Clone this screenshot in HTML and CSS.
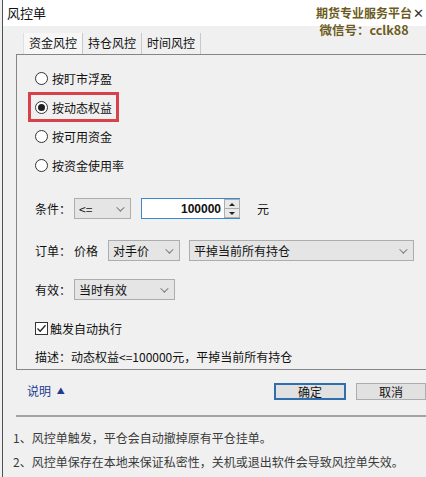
FILE: index.html
```html
<!DOCTYPE html>
<html lang="zh-CN">
<head>
  <meta charset="UTF-8" />
  <title>风控单</title>
  <link rel="stylesheet" href="styles.css">
</head>
<body>
  <div class="window">
    <div class="titlebar">
      <span class="title">风控单</span>
      <span class="close">✕</span>
    </div>
    <div class="watermark">
      <div>期货专业服务平台</div>
      <div class="wx">微信号：cclk88</div>
    </div>

    <div class="content">
      <div class="tabs">
        <span class="tab active">资金风控</span>
        <span class="tab">持仓风控</span>
        <span class="tab">时间风控</span>
      </div>

      <div class="panel">
        <div class="options">
          <label class="radio"><span class="circle"></span>按盯市浮盈</label>
          <label class="radio checked marked"><span class="circle"></span>按动态权益</label>
          <label class="radio"><span class="circle"></span>按可用资金</label>
          <label class="radio"><span class="circle"></span>按资金使用率</label>
        </div>

        <div class="row row-cond">
          <span class="label">条件：</span>
          <div class="select sel-op"><span>&lt;=</span><span class="chev"></span></div>
          <div class="number">
            <span class="value">100000</span>
            <span class="spin"><span class="up"></span><span class="down"></span></span>
          </div>
          <span class="unit">元</span>
        </div>

        <div class="row row-order">
          <span class="label">订单：</span>
          <span class="sub">价格</span>
          <div class="select sel-price"><span>对手价</span><span class="chev"></span></div>
          <div class="select sel-action"><span>平掉当前所有持仓</span><span class="chev"></span></div>
        </div>

        <div class="row row-valid">
          <span class="label">有效：</span>
          <div class="select sel-valid"><span>当时有效</span><span class="chev"></span></div>
        </div>

        <label class="check">
          <span class="box">
            <svg width="11" height="11" viewBox="0 0 11 11"><path d="M1.5 5.5 L4.2 8.2 L9.5 2.2" fill="none" stroke="#222" stroke-width="1.3"/></svg>
          </span>触发自动执行
        </label>

        <div class="desc">描述：动态权益&lt;=100000元，平掉当前所有持仓</div>
      </div>

      <div class="footer">
        <span class="help">说明 <span class="tri">▲</span></span>
        <div class="buttons">
          <button class="btn primary">确定</button>
          <button class="btn">取消</button>
        </div>
      </div>

      <div class="notes">
        <p>1、风控单触发，平仓会自动撤掉原有平仓挂单。</p>
        <p>2、风控单保存在本地来保证私密性，关机或退出软件会导致风控单失效。</p>
      </div>
    </div>
  </div>
</body>
</html>
```

FILE: styles.css
```css
body {
  margin: 0;
  background: #f0f0f0;
  font-family: "Noto Sans CJK SC", "Noto Sans", sans-serif;
  font-size: 12px;
  color: #111;
  overflow: hidden;
}

.window {
  position: relative;
  margin-left: 2px;
  border-left: 1px solid #505050;
  height: 477px;
  background: #f0f0f0;
}

.titlebar {
  height: 26px;
  background: #fff;
  display: flex;
  align-items: center;
  padding-left: 4px;
}

.title {
  font-size: 13px;
  line-height: 16px;
}

.close {
  margin-left: auto;
  margin-right: 2px;
  font-size: 13px;
  color: #333;
  font-family: "DejaVu Sans", sans-serif;
}

.watermark {
  position: absolute;
  right: 14px;
  top: 4px;
  font-weight: bold;
  font-size: 12px;
  line-height: 17px;
  color: #6b5b22;
  text-align: center;
  text-shadow: 0 0 2px #fff;
}

.watermark .wx {
  font-family: "Noto Sans CJK SC", "Open Sans", sans-serif;
  font-size: 12.5px;
}

.content {
  padding-left: 13px;
}

.tabs {
  display: flex;
  margin-top: 7px;
  padding-left: 7px;
  height: 21px;
}

.tab {
  padding: 0 5px;
  line-height: 20px;
  border-right: 1px solid #c8c8c8;
  color: #111;
}

.tab.active {
  background: #f7f7f7;
  border-left: 1px solid #e0e0e0;
}

.panel {
  border-top: 1px solid #858585;
  border-left: 1px solid #858585;
  border-bottom: 1px solid #858585;
  padding: 15px 0 3px 18px;
  height: 296px;
}

.options {
  display: flex;
  flex-direction: column;
  gap: 13px;
}

.radio {
  display: flex;
  align-items: center;
  gap: 4px;
  height: 16px;
  width: max-content;
}

.circle {
  width: 11px;
  height: 11px;
  border: 1px solid #333;
  border-radius: 50%;
  background: #fff;
  display: flex;
  align-items: center;
  justify-content: center;
}

.radio.checked .circle::after {
  content: "";
  width: 7px;
  height: 7px;
  border-radius: 50%;
  background: #1f1f1f;
}

.radio.marked {
  outline: 3px solid #d9414a;
  outline-offset: 4px;
}

.row {
  display: flex;
  align-items: center;
  height: 21px;
}

.row-cond { margin-top: 25px; }
.row-order { margin-top: 21px; }
.row-valid { margin-top: 18px; }

.label {
  width: 39px;
}

.sub {
  width: 34px;
}

.select {
  height: 19px;
  background: #e5e5e5;
  border: 1px solid #adadad;
  display: flex;
  align-items: center;
  padding-left: 4px;
  box-sizing: border-box;
  height: 21px;
}

.chev {
  margin-left: auto;
  margin-right: 8px;
  width: 5px;
  height: 5px;
  border-right: 1px solid #777;
  border-bottom: 1px solid #777;
  transform: rotate(45deg) translateY(-2px);
}

.sel-op { width: 57px; }
.sel-price { width: 72px; }
.sel-action { width: 225px; margin-left: 9px; }
.sel-valid { width: 101px; }

.number {
  margin-left: 10px;
  width: 99px;
  height: 21px;
  box-sizing: border-box;
  border: 1px solid #3d87d0;
  background: #fff;
  display: flex;
  align-items: center;
}

.value {
  flex: 1;
  text-align: right;
  font-weight: bold;
  font-family: "Liberation Sans", sans-serif;
  font-size: 12px;
  padding-right: 3px;
}

.spin {
  width: 14px;
  height: 17px;
  border: 1px solid #adadad;
  background: #e8e8e8;
  display: flex;
  flex-direction: column;
  margin-right: -1px;
}

.spin span {
  flex: 1;
  display: flex;
  align-items: center;
  justify-content: center;
}

.spin .up { border-bottom: 1px solid #adadad; }

.spin .up::after {
  content: "";
  border: 3px solid transparent;
  border-bottom: 3px solid #222;
  margin-top: -3px;
}

.spin .down::after {
  content: "";
  border: 3px solid transparent;
  border-top: 3px solid #222;
  margin-bottom: -3px;
}

.unit {
  margin-left: 17px;
}

.check {
  margin-top: 20px;
  display: flex;
  align-items: center;
  gap: 2px;
  height: 16px;
}

.box {
  width: 11px;
  height: 11px;
  border: 1px solid #333;
  background: #fff;
  display: flex;
}

.desc {
  margin-top: 13px;
  height: 16px;
  line-height: 16px;
}

.footer {
  display: flex;
  align-items: center;
  height: 47px;
  padding-top: 1px;
  padding-left: 11px;
  border-bottom: 2px solid #a3a3a3;
  box-sizing: border-box;
  align-items: flex-start;
}

.help {
  color: #203b8f;
  margin-top: 11px;
}

.tri {
  font-size: 8px;
  vertical-align: 2px;
  margin-left: 3px;
}

.buttons {
  margin-left: auto;
  display: flex;
  gap: 10px;
  margin-top: 12px;
}

.btn {
  font-family: inherit;
  font-size: 12px;
  width: 70px;
  height: 17px;
  padding: 0;
  background: #e1e1e1;
  border: 1px solid #adadad;
  color: #111;
  line-height: 14px;
}

.btn.primary {
  width: 72px;
  border: 2px solid #2f6fae;
}

.notes {
  margin-left: -3px;
  color: #3a3a3a;
}

.notes p {
  margin: 0;
  line-height: 24px;
  white-space: nowrap;
}

.notes p:first-child {
  margin-top: 9px;
}
```
